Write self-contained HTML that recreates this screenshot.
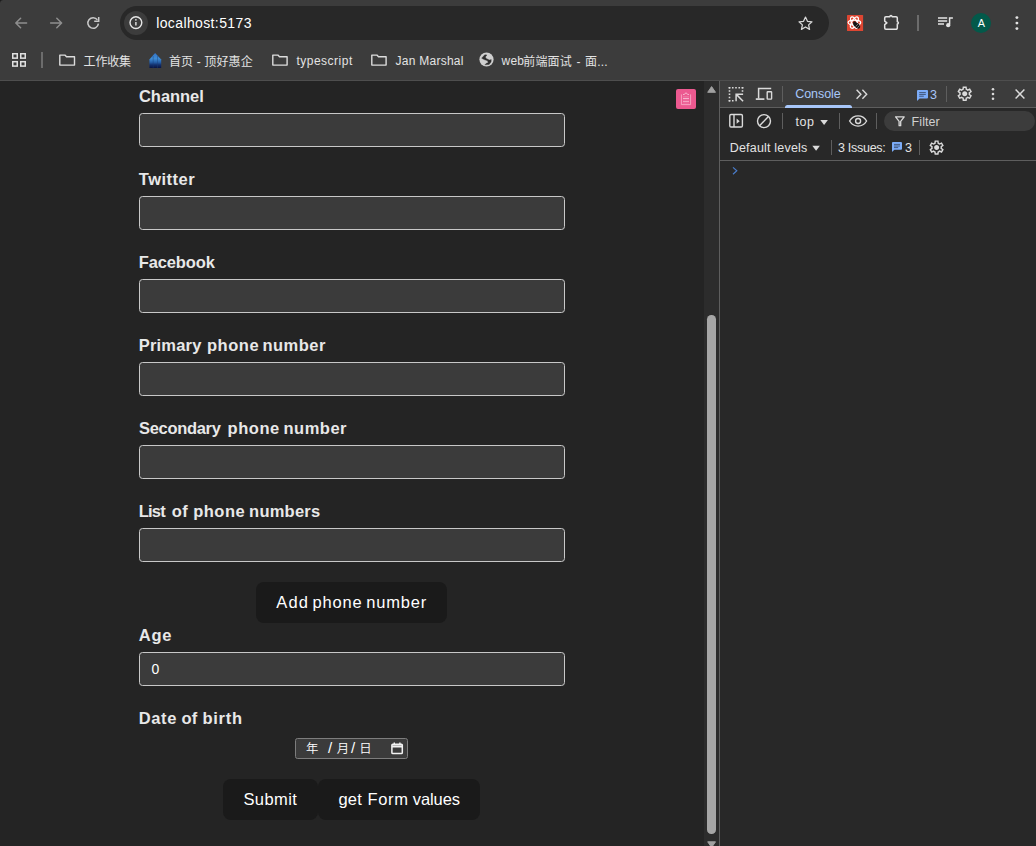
<!DOCTYPE html>
<html lang="zh">
<head>
<meta charset="utf-8">
<title>localhost:5173</title>
<style>
*{box-sizing:border-box;margin:0;padding:0}
html,body{width:1036px;height:846px;overflow:hidden;background:#242424}
body{position:relative;font-family:"Liberation Sans","Noto Sans CJK SC",sans-serif;color:#e3e3e3}
.abs,.abs>span,.abs>svg,.abs>div{position:absolute}
span{white-space:nowrap}
svg{overflow:visible}
/* ---------- browser chrome ---------- */
#chrome{left:0;top:0;width:1036px;height:81px;background:#3c3c3c;border-bottom:1px solid #4e4e4e}
#corner{left:0;top:0;width:3px;height:3px;background:radial-gradient(circle at 3px 3px,#3c3c3c 2.4px,#1c1c1c 3.3px)}
#urlbar{left:120px;top:6px;width:708.5px;height:34px;border-radius:17px;background:#282828}
#info{left:124px;top:10.5px;width:24px;height:24px;border-radius:12px;background:#3c3c3c}
#url{left:0;top:12.5px;font-size:14px;line-height:20px;color:#fff}
#bm{left:0;top:51.7px;font-size:12px;line-height:18px;color:#e3e3e3}
.vsep{width:1px;background:#6e6e6e}
/* ---------- page ---------- */
#page{left:0;top:81px;width:704px;height:765px;background:#242424;overflow:hidden}
.lbl{left:0;font-size:16.5px;line-height:20px;font-weight:700;color:#e8e8e8}
.inp{left:139px;width:426px;height:34px;background:#3b3b3b;border:1px solid #c8c8c8;border-radius:3.5px;font-size:14px;line-height:32px;color:#fff}
.btn{height:40.6px;background:#1a1a1a;border-radius:8px}
.btxt{left:0;font-size:16.5px;line-height:20px;color:#fff}
#date{left:295px;top:657px;width:113px;height:21px;background:#3b3b3b;border:1px solid #7d7d7d;border-radius:2.5px}
#dtxt{left:0;top:660px;font-size:12.4px;line-height:16px;color:#fff;font-weight:350}
#pink{left:676px;top:8px;width:20px;height:20px;border-radius:2px;background:#ec5990}
/* scrollbar */
#sb{left:704px;top:81px;width:15px;height:765px;background:#2c2c2c}
#thumb{left:707.3px;top:314.5px;width:8.6px;height:519.5px;border-radius:4.3px;background:#a6a6a6}
/* ---------- devtools ---------- */
#dt{left:719px;top:81px;width:317px;height:765px;background:#282828;border-left:1px solid #5e5e5e}
#dtbar{left:720px;top:81px;width:316px;height:26px;background:#3c3c3c}
.dtt{left:0;font-size:12.5px;line-height:16px;color:#e3e3e3}
.hline{height:1px;background:#5e5e5e}
#filter{left:884px;top:111px;width:150.5px;height:20px;border-radius:10px;background:#3c3c3c}
</style>
</head>
<body>
<!-- ================= browser chrome ================= -->
<div id="chrome" class="abs"></div>
<div id="corner" class="abs"></div>
<!-- back / forward / reload -->
<svg class="abs" style="left:0;top:0" width="120" height="46" fill="none" stroke-linecap="round" stroke-linejoin="round">
  <path d="M26.6 23H15.9M20.6 18.2L15.8 23l4.8 4.8" stroke="#8e8e8e" stroke-width="1.5"/>
  <path d="M50.6 23h10.9M56.8 18.2l4.8 4.8-4.8 4.8" stroke="#8e8e8e" stroke-width="1.5"/>
  <path d="M97.4 19.8A5.3 5.3 0 1 0 98.4 23.6" stroke="#c9c9c9" stroke-width="1.5" stroke-linecap="butt"/>
  <path d="M98.7 17v4.3h-4.5" stroke="#c9c9c9" stroke-width="1.5" stroke-linecap="butt" stroke-linejoin="miter"/>
</svg>
<div id="urlbar" class="abs"></div>
<div id="info" class="abs"></div>
<svg class="abs" style="left:128px;top:15px" width="16" height="16" fill="none">
  <circle cx="7.9" cy="7.6" r="5.9" stroke="#e6e6e6" stroke-width="1.4"/>
  <path d="M7.9 7v3.6" stroke="#e6e6e6" stroke-width="1.4"/>
  <circle cx="7.9" cy="4.8" r=".85" fill="#e6e6e6"/>
</svg>
<div id="url" class="abs"><span style="left:156.2px;letter-spacing:.38px">localhost:5173</span></div>
<!-- star -->
<svg class="abs" style="left:797px;top:15px" width="17" height="16" fill="none">
  <path d="M8.5 2.1l1.95 4.2 4.55.5-3.4 3.05.95 4.5L8.5 12l-4.05 2.35.95-4.5L2 6.8l4.55-.5z" stroke="#d8d8d8" stroke-width="1.25" stroke-linejoin="round"/>
</svg>
<!-- extension: red atom/bee -->
<svg class="abs" style="left:847px;top:15px" width="16" height="16">
  <rect width="16.1" height="16.1" rx=".6" fill="#dd4632"/>
  <g fill="none" stroke="#fff" stroke-width="1.25">
    <ellipse cx="7.4" cy="7.6" rx="6.3" ry="2.6"/>
    <ellipse cx="7.4" cy="7.6" rx="6.3" ry="2.6" transform="rotate(60 7.4 7.6)"/>
    <ellipse cx="7.4" cy="7.6" rx="6.3" ry="2.6" transform="rotate(120 7.4 7.6)"/>
  </g>
  <ellipse cx="9.7" cy="10.3" rx="4.1" ry="2.3" transform="rotate(42 9.7 10.3)" fill="#141414"/>
  <circle cx="7.5" cy="7.6" r="1.3" fill="#141414"/>
  <path d="M8.6 11.6l2.4-2.6M10.3 12.9l2.3-2.5" stroke="#d9d9d9" stroke-width=".5"/>
</svg>
<!-- puzzle -->
<svg class="abs" style="left:883px;top:14px" width="18" height="18" fill="none">
  <path d="M2.9 2.7H6.9a1.1 1.1 0 0 1 2.2 0H13.1a1.2 1.2 0 0 1 1.2 1.2V7.7a1.1 1.1 0 0 1 0 2.2V14.1a1.2 1.2 0 0 1-1.2 1.2H2.9a1.2 1.2 0 0 1-1.2-1.2V10.7l2.2-1.8-2.2-1.8V3.9a1.2 1.2 0 0 1 1.2-1.2z" stroke="#e3e3e3" stroke-width="1.5" stroke-linejoin="round"/>
</svg>
<div class="abs vsep" style="left:917px;top:15.2px;width:2px;height:15.4px;background:#6c6c6c"></div>
<!-- media -->
<svg class="abs" style="left:937px;top:16px" width="17" height="13" fill="none">
  <path d="M1 1.9h9.2M1 4.9h9.2M1 7.9h6" stroke="#e3e3e3" stroke-width="1.5"/>
  <path d="M12.6 1.2v7.6M12.6 1.9h3.3" stroke="#e3e3e3" stroke-width="1.5"/>
  <circle cx="11.2" cy="9.2" r="2.1" fill="#e3e3e3"/>
</svg>
<!-- avatar -->
<div class="abs" style="left:971.3px;top:13px;width:20px;height:20px;border-radius:10px;background:#03594a"></div>
<div class="abs" style="left:0;top:16px;font-size:10.8px;line-height:14px;color:#fff"><span style="left:977.7px">A</span></div>
<!-- menu dots -->
<svg class="abs" style="left:1012px;top:14px" width="10" height="18"><circle cx="4.9" cy="3.6" r="1.45" fill="#e3e3e3"/><circle cx="4.9" cy="9.1" r="1.45" fill="#e3e3e3"/><circle cx="4.9" cy="14.6" r="1.45" fill="#e3e3e3"/></svg>

<!-- bookmarks bar -->
<svg class="abs" style="left:12px;top:53px" width="15" height="15" fill="none" stroke="#e0e0e0" stroke-width="1.5">
  <rect x=".75" y=".75" width="4.5" height="4.4"/><rect x="8.75" y=".75" width="4.5" height="4.4"/>
  <rect x=".75" y="8.7" width="4.5" height="4.4"/><rect x="8.75" y="8.7" width="4.5" height="4.4"/>
</svg>
<div class="abs vsep" style="left:40.8px;top:52px;width:2px;height:15.8px;background:#6c6c6c"></div>
<svg class="abs" style="left:59px;top:54px" width="17" height="13" fill="none"><path d="M.8 1.1h5.1l1.6 1.7h8v8.3H.8z" stroke="#dcdcdc" stroke-width="1.4" stroke-linejoin="round"/></svg>
<svg class="abs" style="left:272px;top:54px" width="17" height="13" fill="none"><path d="M.8 1.1h5.1l1.6 1.7h7.6v8.3H.8z" stroke="#dcdcdc" stroke-width="1.4" stroke-linejoin="round"/></svg>
<svg class="abs" style="left:371px;top:54px" width="17" height="13" fill="none"><path d="M.8 1.1h5.1l1.6 1.7h7.6v8.3H.8z" stroke="#dcdcdc" stroke-width="1.4" stroke-linejoin="round"/></svg>
<!-- favicon (blue) -->
<svg class="abs" style="left:149px;top:52.6px" width="13" height="16">
  <defs><linearGradient id="fg" x1="0" y1="0" x2="0" y2="1"><stop offset="0" stop-color="#3473c6"/><stop offset=".38" stop-color="#3f8cd4"/><stop offset=".62" stop-color="#2560aa"/><stop offset=".8" stop-color="#122f6c"/><stop offset="1" stop-color="#0a1543"/></linearGradient></defs>
  <path d="M6.1 0L12.2 6.6V14.9H.4V6.6z" fill="url(#fg)"/>
  <path d="M4.2 3v12.4M8.5 3v12.4" stroke="#1b3f78" stroke-width=".5" opacity=".8"/>
</svg>
<!-- globe -->
<svg class="abs" style="left:479.4px;top:52.4px" width="15" height="15">
  <circle cx="7.5" cy="7.5" r="7.1" fill="#cfcfcf"/>
  <path d="M2.6 6.2L5.8 2.7 8 2.9 6.4 4.9 7.2 6.4 10.4 7.9 12.3 7.6 12.1 9.9 10.1 12.5 5.8 12.8 7.4 11.2 9.3 10.5 8.4 8.8 5 7.6z" fill="#2d2d2d" stroke="#2d2d2d" stroke-width=".3" stroke-linejoin="round"/>
</svg>
<div id="bm" class="abs">
  <span style="left:83.6px;top:1px;letter-spacing:-.2px">工作收集</span>
  <span style="left:168.9px;top:1px;letter-spacing:.14px">首页 - 顶好惠企</span>
  <span style="left:296.4px;letter-spacing:.5px">typescript</span>
  <span style="left:395.5px;letter-spacing:.26px">Jan Marshal</span>
  <span style="left:501.6px;letter-spacing:.16px">web</span><span style="left:523.3px;top:1px;letter-spacing:.16px;word-spacing:1px">前端面试 - 面...</span>
</div>

<!-- ================= page ================= -->
<div id="page" class="abs">
  <div class="abs lbl" style="top:4.7px"><span style="left:139px;letter-spacing:-0.05px">Channel</span></div>
  <div class="abs inp" style="top:32px"></div>
  <div class="abs lbl" style="top:87.7px"><span style="left:138.8px;letter-spacing:0.51px">Twitter</span></div>
  <div class="abs inp" style="top:115px"></div>
  <div class="abs lbl" style="top:170.7px"><span style="left:138.7px;letter-spacing:-0.12px">Facebook</span></div>
  <div class="abs inp" style="top:198px"></div>
  <div class="abs lbl" style="top:253.7px"><span style="left:138.7px;letter-spacing:0.2px">Primary</span><span style="left:206.9px;letter-spacing:0.57px">phone</span><span style="left:262.4px;letter-spacing:0.5px">number</span></div>
  <div class="abs inp" style="top:281px"></div>
  <div class="abs lbl" style="top:336.7px"><span style="left:139px;letter-spacing:-0.31px">Secondary</span><span style="left:227.6px;letter-spacing:0.52px">phone</span><span style="left:283.5px;letter-spacing:0.5px">number</span></div>
  <div class="abs inp" style="top:364px"></div>
  <div class="abs lbl" style="top:419.7px"><span style="left:138.7px;letter-spacing:-0.78px">List</span><span style="left:171.7px;letter-spacing:0.42px">of</span><span style="left:193.2px;letter-spacing:0.5px">phone</span><span style="left:249.1px;letter-spacing:0.23px">numbers</span></div>
  <div class="abs inp" style="top:447px"></div>
  <div class="abs btn" style="left:256px;top:501px;width:191px"></div>
  <div class="abs btxt" style="top:510.7px"><span style="left:276.3px;letter-spacing:1.1px">Add</span><span style="left:312.5px;letter-spacing:0.85px">phone</span><span style="left:366.2px;letter-spacing:0.81px">number</span></div>
  <div class="abs lbl" style="top:543.7px"><span style="left:138.8px;letter-spacing:0.75px">Age</span></div>
  <div class="abs inp" style="top:571px"><span style="left:11.4px;top:0">0</span></div>
  <div class="abs lbl" style="top:626.7px"><span style="left:138.7px;letter-spacing:0.64px">Date</span><span style="left:181.5px;letter-spacing:0.12px">of</span><span style="left:202.5px;letter-spacing:0.7px">birth</span></div>
  <div id="date" class="abs"></div>
  <div id="dtxt" class="abs"><span style="left:306px">年</span><span style="left:328.1px;top:-1.4px;font-size:15px">/</span><span style="left:336.8px">月</span><span style="left:351.1px;top:-1.4px;font-size:15px">/</span><span style="left:359.3px">日</span></div>
  <!-- calendar icon -->
  <svg class="abs" style="left:391px;top:661px" width="13" height="14" fill="none">
    <rect x=".9" y="2.2" width="10.4" height="9.4" rx=".9" stroke="#f2f2f2" stroke-width="1.5"/>
    <path d="M.9 4.4h10.4" stroke="#f2f2f2" stroke-width="2.2"/>
    <path d="M3.3 .6v2M8.9 .6v2" stroke="#f2f2f2" stroke-width="1.4"/>
  </svg>
  <div class="abs btn" style="left:223px;top:698px;width:94.8px"></div>
  <div class="abs btn" style="left:318px;top:698px;width:162px"></div>
  <div class="abs btxt" style="top:707.7px"><span style="left:243.4px;letter-spacing:0.43px">Submit</span><span style="left:338.4px;letter-spacing:0.27px">get</span><span style="left:367.6px;letter-spacing:0.62px">Form</span><span style="left:412.8px;letter-spacing:-0.09px">values</span></div>
  <!-- pink floating icon -->
  <div id="pink" class="abs"></div>
  <svg class="abs" style="left:680px;top:11px" width="12" height="14" fill="none" stroke="#fbd3e2" stroke-width=".8">
    <path d="M1.4 2.4V12.6H10.6V2.4" stroke="#f7b3cd"/>
    <path d="M3 2.5h1.6M7.4 2.5h1.6M4.8 2.2a1.2 1.2 0 0 1 2.4 0" stroke="#f9c9db" stroke-width=".8"/>
    <path d="M3 6.4h6" stroke="#fbd5e3" stroke-width=".8"/><path d="M3 9.5h6" stroke="#f7b5ce" stroke-width=".8"/><path d="M3 4.7h6M3 8h6M3 11h6" stroke="#f18bb3" stroke-width=".6"/>
  </svg>
</div>
<!-- scrollbar -->
<div id="sb" class="abs"></div>
<svg class="abs" style="left:704px;top:81px" width="15" height="765"><path d="M7.6 5.6L11.5 11.3H3.7z" fill="#a0a0a0" stroke="#a0a0a0" stroke-width="1" stroke-linejoin="round"/><path d="M3.7 760.8h7.8l-3.9 5.7z" fill="#a0a0a0" stroke="#a0a0a0" stroke-width="1" stroke-linejoin="round"/></svg>
<div id="thumb" class="abs"></div>

<!-- ================= devtools ================= -->
<div id="dt" class="abs"></div>
<div id="dtbar" class="abs"></div>
<div class="abs hline" style="left:720px;top:107px;width:316px"></div>
<div class="abs hline" style="left:720px;top:160px;width:316px"></div>
<!-- row 1 icons -->
<svg class="abs" style="left:720px;top:81px" width="316" height="27" fill="none" stroke="#dadada" stroke-width="1.4">
  <!-- inspect -->
  <g stroke-width="1.6" stroke-dasharray="1.6 1.65" stroke-linecap="butt">
    <path d="M8.7 6.7h14.6"/><path d="M9.5 5.9v14.6"/><path d="M22.5 5.9v4.9"/><path d="M8.7 19.7h4.9"/>
  </g>
  <path d="M16.1 20.2v-7h7M16.3 13.4l6.8 6.8" stroke-width="1.5" stroke-linecap="butt"/>
  <!-- device -->
  <path d="M38.6 17.4V7.6h12.6" stroke-width="1.5"/><path d="M35.8 18.1h8.6" stroke-width="1.7"/>
  <rect x="47.2" y="10.7" width="4.4" height="7.4" rx=".6" stroke-width="1.4"/>
  <!-- >> -->
  <path d="M136.6 8.8l4.3 4.5-4.3 4.5M142.4 8.8l4.3 4.5-4.3 4.5" stroke-width="1.4"/>
  <!-- close X -->
  <path d="M295.6 8.5l8.8 9M304.4 8.5l-8.8 9" stroke-width="1.5"/>
</svg>
<div class="abs vsep" style="left:782px;top:86px;height:15.5px;background:#5e5e5e"></div>
<div class="abs vsep" style="left:946px;top:86px;height:15.5px;background:#5e5e5e"></div>
<div class="abs" style="left:785px;top:105px;width:67px;height:3px;border-radius:2.5px 2.5px 0 0;background:#a8c7fa"></div>
<div class="abs dtt" style="top:86.2px;color:#a8c7fa"><span style="left:795.2px;letter-spacing:-.05px">Console</span><span style="left:930px;top:.8px">3</span></div>
<!-- message icon row1 -->
<svg class="abs" style="left:917px;top:90px" width="11" height="11"><path d="M1 0h9a1 1 0 0 1 1 1v6.6a1 1 0 0 1-1 1H2.6L0 11V1a1 1 0 0 1 1-1z" fill="#7cacf8"/><path d="M2.2 2.6h6.6M2.2 4.4h6.6M2.2 6.2h4.6" stroke="#31405a" stroke-width=".8"/></svg>
<!-- gear row1 -->
<svg class="abs" style="left:956.3px;top:85.3px" width="17.4" height="17.4" viewBox="0 0 24 24"><path fill="#dadada" d="M9.25 22l-.4-3.2a3.8 3.8 0 0 1-.61-.3 8.3 8.3 0 0 1-.56-.37l-2.98 1.25-2.75-4.75 2.58-1.95a2.4 2.4 0 0 1-.03-.34v-.68c0-.1.01-.22.03-.34L1.95 9.37 4.7 4.62l2.98 1.25c.18-.13.37-.26.57-.37.2-.12.4-.22.6-.3l.4-3.2h5.5l.4 3.2c.22.08.42.18.61.3.2.11.38.24.56.37l2.98-1.25 2.75 4.75-2.58 1.95c.02.12.03.23.03.34v.68c0 .1-.02.22-.05.34l2.58 1.95-2.75 4.75-2.95-1.25c-.18.13-.37.26-.57.37-.2.12-.4.22-.6.3l-.4 3.2zM11 20h1.98l.35-2.65c.52-.13 1-.33 1.44-.59.44-.26.85-.57 1.21-.94l2.48 1.03.97-1.7-2.15-1.63c.08-.23.14-.48.18-.74a5.3 5.3 0 0 0 0-1.56 3.6 3.6 0 0 0-.18-.74l2.15-1.63-.97-1.7-2.48 1.05a5.6 5.6 0 0 0-2.65-1.55L13 4h-1.98l-.35 2.65c-.52.13-1 .33-1.44.59-.44.26-.85.57-1.21.94L5.55 7.15l-.97 1.7 2.15 1.6c-.08.25-.14.5-.18.75a5.5 5.5 0 0 0 0 1.57c.04.25.1.5.18.75l-2.15 1.63.97 1.7 2.48-1.05a5.6 5.6 0 0 0 2.64 1.55zm1.05-4.5c.97 0 1.8-.34 2.48-1.02.68-.69 1.02-1.51 1.02-2.48s-.34-1.8-1.02-2.48A3.37 3.37 0 0 0 12.05 8.5c-.98 0-1.81.34-2.49 1.02A3.4 3.4 0 0 0 8.55 12c0 .97.34 1.79 1.01 2.48.68.68 1.51 1.02 2.49 1.02z"/></svg>
<svg class="abs" style="left:989px;top:86px" width="8" height="16"><circle cx="4" cy="3.3" r="1.3" fill="#dadada"/><circle cx="4" cy="8" r="1.3" fill="#dadada"/><circle cx="4" cy="12.7" r="1.3" fill="#dadada"/></svg>

<!-- row 2 -->
<svg class="abs" style="left:720px;top:108px" width="316" height="27" fill="none" stroke="#dadada" stroke-width="1.4">
  <!-- sidebar -->
  <rect x="9.8" y="6.5" width="12.6" height="12.5" rx="1.2"/><path d="M14 6.5v12.5"/><path d="M16.6 10.6l3.1 2.6-3.1 2.6z" fill="#dadada" stroke="none"/>
  <!-- clear -->
  <circle cx="44" cy="13.1" r="6.5"/><path d="M39.6 17.8l8.8-9.4"/>
  <!-- top arrow -->
  <path d="M100.3 11.9h7.6l-3.8 5.1z" fill="#dadada" stroke="none"/>
  <!-- eye -->
  <path d="M129.6 13c2-3.4 5-5.1 8.5-5.1s6.5 1.7 8.5 5.1c-2 3.4-5 5.1-8.5 5.1s-6.5-1.7-8.5-5.1z"/><circle cx="138.1" cy="13" r="2.5"/>
</svg>
<div class="abs vsep" style="left:782px;top:113px;height:15.5px;background:#5e5e5e"></div>
<div class="abs vsep" style="left:839px;top:113px;height:15.5px;background:#5e5e5e"></div>
<div class="abs vsep" style="left:875.5px;top:113px;height:15.5px;background:#5e5e5e"></div>
<div id="filter" class="abs"></div>
<svg class="abs" style="left:894px;top:115px" width="12" height="12" fill="none"><path d="M1.6 1.8h8.6l-3.5 4.5v4.4h-1.6v-4.4z" stroke="#dadada" stroke-width="1.3" stroke-linejoin="round"/></svg>
<div class="abs dtt" style="top:114.2px"><span style="left:795.5px;letter-spacing:.54px">top</span><span style="left:911.6px;letter-spacing:.08px;color:#d0d0d0">Filter</span></div>

<!-- row 3 -->
<div class="abs dtt" style="top:139.5px"><span style="left:729.7px;letter-spacing:.2px">Default levels</span><span style="left:838px;letter-spacing:-.28px">3 Issues:</span><span style="left:905px">3</span></div>
<svg class="abs" style="left:720px;top:134px" width="316" height="27" fill="none">
  <path d="M92.3 11.7h7.6l-3.8 5.1z" fill="#dadada"/>
</svg>
<div class="abs vsep" style="left:831px;top:139.5px;height:15.5px;background:#5e5e5e"></div>
<div class="abs vsep" style="left:919px;top:139.5px;height:15.5px;background:#5e5e5e"></div>
<svg class="abs" style="left:892px;top:141.8px" width="10" height="10"><path d="M.9 0h8.2a.9.9 0 0 1 .9.9v5.9a.9.9 0 0 1-.9.9H2.4L0 10V.9A.9.9 0 0 1 .9 0z" fill="#7cacf8"/><path d="M2 2.4h6M2 4h6M2 5.6h4.2" stroke="#31405a" stroke-width=".75"/></svg>
<svg class="abs" style="left:928.4px;top:138.7px" width="17.2" height="17.2" viewBox="0 0 24 24"><path fill="#dadada" d="M9.25 22l-.4-3.2a3.8 3.8 0 0 1-.61-.3 8.3 8.3 0 0 1-.56-.37l-2.98 1.25-2.75-4.75 2.58-1.95a2.4 2.4 0 0 1-.03-.34v-.68c0-.1.01-.22.03-.34L1.95 9.37 4.7 4.62l2.98 1.25c.18-.13.37-.26.57-.37.2-.12.4-.22.6-.3l.4-3.2h5.5l.4 3.2c.22.08.42.18.61.3.2.11.38.24.56.37l2.98-1.25 2.75 4.75-2.58 1.95c.02.12.03.23.03.34v.68c0 .1-.02.22-.05.34l2.58 1.95-2.75 4.75-2.95-1.25c-.18.13-.37.26-.57.37-.2.12-.4.22-.6.3l-.4 3.2zM11 20h1.98l.35-2.65c.52-.13 1-.33 1.44-.59.44-.26.85-.57 1.21-.94l2.48 1.03.97-1.7-2.15-1.63c.08-.23.14-.48.18-.74a5.3 5.3 0 0 0 0-1.56 3.6 3.6 0 0 0-.18-.74l2.15-1.63-.97-1.7-2.48 1.05a5.6 5.6 0 0 0-2.65-1.55L13 4h-1.98l-.35 2.65c-.52.13-1 .33-1.44.59-.44.26-.85.57-1.21.94L5.55 7.15l-.97 1.7 2.15 1.6c-.08.25-.14.5-.18.75a5.5 5.5 0 0 0 0 1.57c.04.25.1.5.18.75l-2.15 1.63.97 1.7 2.48-1.05a5.6 5.6 0 0 0 2.64 1.55zm1.05-4.5c.97 0 1.8-.34 2.48-1.02.68-.69 1.02-1.51 1.02-2.48s-.34-1.8-1.02-2.48A3.37 3.37 0 0 0 12.05 8.5c-.98 0-1.81.34-2.49 1.02A3.4 3.4 0 0 0 8.55 12c0 .97.34 1.79 1.01 2.48.68.68 1.51 1.02 2.49 1.02z"/></svg>
<!-- prompt -->
<svg class="abs" style="left:731px;top:166px" width="8" height="10" fill="none"><path d="M2 1.4l3.8 3.4-3.8 3.4" stroke="#4a7dcc" stroke-width="1.15"/></svg>
</body>
</html>
